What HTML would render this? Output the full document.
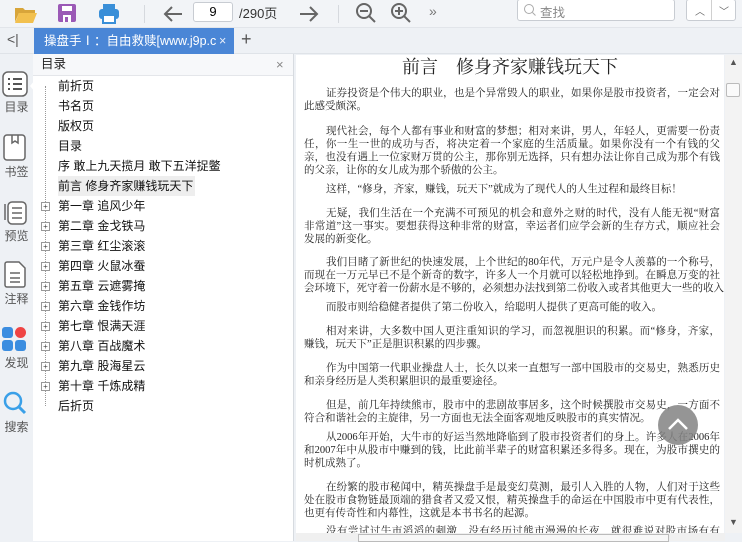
<!DOCTYPE html>
<html><head><meta charset="utf-8">
<style>
*{margin:0;padding:0;box-sizing:border-box}
body{width:742px;height:541px;overflow:hidden;background:#eef1f5;font-family:"Liberation Sans","Noto Sans CJK SC",sans-serif;position:relative}
.abs{position:absolute}
#tb{left:0;top:0;width:742px;height:28px;background:#f2f4f7;border-bottom:1px solid #e2e5ea}
#tabbar{left:0;top:28px;width:742px;height:26px;background:#eef1f5;border-bottom:1px solid #dfe3e8}
#tab{left:34px;top:28px;width:200px;height:26px;background:#4a86d6;color:#fff;font-size:12.5px;line-height:26px;padding-left:10px;white-space:nowrap;overflow:hidden}
#side{left:0;top:54px;width:33px;height:487px;background:#eef1f5}
.si{position:absolute;left:0;width:33px;text-align:center;font-size:12px;color:#555}
#toc{left:33px;top:54px;width:261px;height:487px;background:#fff;border-right:1px solid #d7dbe0}
#toch{left:0;top:0;width:260px;height:22px;border-bottom:1px solid #e4e6ea;background:#f7f8fa;font-size:12.5px;line-height:21px;padding-left:8px;color:#222}
.ti{position:absolute;left:25px;font-size:12px;color:#111;line-height:20px;height:20px;white-space:nowrap}
.pl{position:absolute;left:8px;width:9px;height:9px;border:1px solid #999;font-size:8px;line-height:7px;text-align:center;color:#444;background:#fff}
#page{left:296px;top:55px;width:428px;height:478px;background:#fff;overflow:hidden}
.ln{position:absolute;left:8px;width:416px;font-family:"Liberation Serif","Noto Serif CJK SC",serif;font-size:10.5px;line-height:13px;height:13px;color:#222;white-space:nowrap}
.j{text-align:justify;text-align-last:justify}
.i{padding-left:22px}
</style></head><body>
<div id="tb" class="abs">
 <svg class="abs" style="left:14px;top:4px" width="24" height="20"><path d="M1 4h8l2 2h10v3H5L1 18z" fill="#d8a53a"/><path d="M5 9h18l-4 10H1z" fill="#f2c04e"/></svg>
 <svg class="abs" style="left:57px;top:3px" width="20" height="20"><rect x="1" y="1" width="18" height="18" rx="2" fill="#9b59b6"/><rect x="5" y="3" width="10" height="5" fill="#fff"/><rect x="6" y="12" width="8" height="7" fill="#fff"/><rect x="8" y="14" width="3" height="5" fill="#9b59b6"/></svg>
 <svg class="abs" style="left:98px;top:2px" width="22" height="22"><rect x="5" y="2" width="12" height="5" fill="#3a8fd8"/><rect x="1" y="7" width="20" height="10" rx="3" fill="#3a8fd8"/><rect x="5" y="13" width="12" height="8" fill="#fff" stroke="#3a8fd8" stroke-width="2"/></svg>
 <div class="abs" style="left:144px;top:5px;width:1px;height:18px;background:#d6d9de"></div>
 <svg class="abs" style="left:162px;top:3px" width="22" height="22"><path d="M20 11H3M10 4l-7 7 7 7" stroke="#666" stroke-width="2" fill="none"/></svg>
 <div class="abs" style="left:193px;top:2px;width:40px;height:20px;border:1px solid #c8ccd2;border-radius:3px;background:#fff;font-size:13px;text-align:center;line-height:18px">9</div>
 <div class="abs" style="left:239px;top:3px;font-size:13px;color:#333">/290页</div>
 <svg class="abs" style="left:298px;top:3px" width="22" height="22"><path d="M2 11h17M12 4l7 7-7 7" stroke="#666" stroke-width="2" fill="none"/></svg>
 <div class="abs" style="left:338px;top:5px;width:1px;height:18px;background:#d6d9de"></div>
 <svg class="abs" style="left:355px;top:2px" width="22" height="22"><circle cx="9" cy="9" r="7" stroke="#666" stroke-width="2" fill="none"/><path d="M5 9h8M14 14l6 6" stroke="#666" stroke-width="2"/></svg>
 <svg class="abs" style="left:390px;top:2px" width="22" height="22"><circle cx="9" cy="9" r="7" stroke="#666" stroke-width="2" fill="none"/><path d="M5 9h8M9 5v8M14 14l6 6" stroke="#666" stroke-width="2"/></svg>
 <div class="abs" style="left:429px;top:3px;font-size:14px;color:#777">»</div>
 <div class="abs" style="left:517px;top:-1px;width:158px;height:22px;border:1px solid #c8ccd2;border-radius:3px;background:#fff"><svg class="abs" style="left:5px;top:3px" width="14" height="14"><circle cx="6" cy="6" r="4.5" stroke="#aaa" fill="none"/><path d="M9.5 9.5l3 3" stroke="#aaa"/></svg><span class="abs" style="left:22px;top:2px;font-size:12.5px;color:#888">查找</span></div>
 <div class="abs" style="left:686px;top:-1px;width:50px;height:22px;border:1px solid #c8ccd2;border-radius:3px;background:#fff"><div class="abs" style="left:24px;top:0;width:1px;height:20px;background:#d0d0d0"></div><span class="abs" style="left:8px;top:3px;font-size:10px;color:#666">︿</span><span class="abs" style="left:32px;top:3px;font-size:10px;color:#666">﹀</span></div>
</div>
<div id="tabbar" class="abs"><span class="abs" style="left:7px;top:3px;font-size:14px;color:#555">&lt;|</span><span class="abs" style="left:241px;top:1px;font-size:18px;color:#555">+</span></div>
<div id="tab" class="abs">操盘手Ⅰ：自由救赎[www.j9p.c<span class="abs" style="left:185px;top:0;color:#e8eefa">×</span></div>
<div id="side" class="abs">
 <svg class="abs" style="left:2px;top:17px" width="27" height="27"><rect x="1" y="1" width="24" height="24" rx="5" fill="#fff" stroke="#666" stroke-width="1.5"/><path d="M6 8h2M11 8h9M6 13h2M11 13h9M6 18h2M11 18h9" stroke="#555" stroke-width="2"/></svg>
 <div class="abs" style="left:30px;top:26px;width:0;height:0;border:6px solid transparent;border-left:0;border-right:5px solid #fff"></div>
 <div class="si" style="top:44px">目录</div>
 <svg class="abs" style="left:3px;top:80px" width="24" height="28"><rect x="1" y="1" width="21" height="25" rx="3" fill="#fff" stroke="#666" stroke-width="1.5"/><path d="M9 1v8l3-2 3 2V1" stroke="#666" fill="none" stroke-width="1.5"/></svg>
 <div class="si" style="top:109px">书签</div>
 <svg class="abs" style="left:2px;top:144px" width="26" height="28"><rect x="6" y="4" width="18" height="22" rx="4" fill="#fff" stroke="#666" stroke-width="1.5"/><path d="M3 6v16M10 10h10M10 15h10M10 20h10" stroke="#666" stroke-width="1.5"/></svg>
 <div class="si" style="top:173px">预览</div>
 <svg class="abs" style="left:3px;top:207px" width="24" height="28"><path d="M2 3a2 2 0 0 1 2-2h12l6 6v17a2 2 0 0 1-2 2H4a2 2 0 0 1-2-2z" fill="#fff" stroke="#666" stroke-width="1.5"/><path d="M7 12h10M7 17h10M7 21h10" stroke="#666" stroke-width="1.5"/></svg>
 <div class="si" style="top:236px">注释</div>
 <div class="abs" style="left:2px;top:273px;width:11px;height:11px;border-radius:3px;background:#3b8de0"></div>
 <div class="abs" style="left:15px;top:273px;width:11px;height:11px;border-radius:50%;background:#ef4444"></div>
 <div class="abs" style="left:2px;top:286px;width:11px;height:11px;border-radius:3px;background:#3b8de0"></div>
 <div class="abs" style="left:15px;top:286px;width:11px;height:11px;border-radius:3px;background:#3b8de0"></div>
 <div class="si" style="top:300px">发现</div>
 <svg class="abs" style="left:2px;top:336px" width="26" height="26"><circle cx="11" cy="11" r="8" stroke="#3aa0e8" stroke-width="2.5" fill="none"/><path d="M17 17l6 6" stroke="#3aa0e8" stroke-width="3"/></svg>
 <div class="si" style="top:364px">搜索</div>
</div>
<div id="toc" class="abs">
 <div id="toch" class="abs">目录<span class="abs" style="left:243px;top:0;color:#888;font-size:13px">×</span></div>
 <div class="abs" style="left:12px;top:32px;height:320px;border-left:1px dotted #999"></div>
 <div class="ti" style="top:22px">前折页</div>
 <div class="ti" style="top:42px">书名页</div>
 <div class="ti" style="top:62px">版权页</div>
 <div class="ti" style="top:82px">目录</div>
 <div class="ti" style="top:102px">序 敢上九天揽月 敢下五洋捉鳖</div>
 <div class="ti" style="top:122px;background:#eeeeee;padding-right:2px">前言 修身齐家赚钱玩天下</div>
 <div class="ti" style="top:142px">第一章 追风少年</div>
 <div class="ti" style="top:162px">第二章 金戈铁马</div>
 <div class="ti" style="top:182px">第三章 红尘滚滚</div>
 <div class="ti" style="top:202px">第四章 火鼠冰蚕</div>
 <div class="ti" style="top:222px">第五章 云遮雾掩</div>
 <div class="ti" style="top:242px">第六章 金钱作坊</div>
 <div class="ti" style="top:262px">第七章 恨满天涯</div>
 <div class="ti" style="top:282px">第八章 百战魔术</div>
 <div class="ti" style="top:302px">第九章 股海星云</div>
 <div class="ti" style="top:322px">第十章 千炼成精</div>
 <div class="ti" style="top:342px">后折页</div>
 <div class="pl" style="top:148px">+</div><div class="pl" style="top:168px">+</div><div class="pl" style="top:188px">+</div><div class="pl" style="top:208px">+</div><div class="pl" style="top:228px">+</div><div class="pl" style="top:248px">+</div><div class="pl" style="top:268px">+</div><div class="pl" style="top:288px">+</div><div class="pl" style="top:308px">+</div><div class="pl" style="top:328px">+</div>
</div>
<div id="page" class="abs">
 <div class="abs" style="left:0;top:0;width:428px;text-align:center;font-family:'Liberation Serif','Noto Serif CJK SC',serif;font-size:18px;line-height:24px;color:#222">前言　修身齐家赚钱玩天下</div>
 <div class="ln j i" style="top:32px">证券投资是个伟大的职业，也是个异常毁人的职业，如果你是股市投资者，一定会对</div>
 <div class="ln" style="top:45px">此感受颇深。</div>
 <div class="ln j i" style="top:70px">现代社会，每个人都有事业和财富的梦想；相对来讲，男人，年轻人，更需要一份责</div>
 <div class="ln j" style="top:83px">任，你一生一世的成功与否，将决定着一个家庭的生活质量。如果你没有一个有钱的父</div>
 <div class="ln j" style="top:96px">亲，也没有遇上一位家财万贯的公主，那你别无选择，只有想办法让你自己成为那个有钱</div>
 <div class="ln" style="top:109px">的父亲，让你的女儿成为那个骄傲的公主。</div>
 <div class="ln i" style="top:128px">这样，“修身，齐家，赚钱，玩天下”就成为了现代人的人生过程和最终目标！</div>
 <div class="ln j i" style="top:152px">无疑，我们生活在一个充满不可预见的机会和意外之财的时代，没有人能无视“财富</div>
 <div class="ln j" style="top:165px">非常道”这一事实。要想获得这种非常的财富，幸运者们应学会新的生存方式，顺应社会</div>
 <div class="ln" style="top:178px">发展的新变化。</div>
 <div class="ln j i" style="top:201px">我们目睹了新世纪的快速发展，上个世纪的80年代，万元户是令人羡慕的一个称号，</div>
 <div class="ln j" style="top:214px">而现在一万元早已不是个新奇的数字，许多人一个月就可以轻松地挣到。在瞬息万变的社</div>
 <div class="ln j" style="top:227px">会环境下，死守着一份薪水是不够的，必须想办法找到第二份收入或者其他更大一些的收入。</div>
 <div class="ln i" style="top:246px">而股市则给稳健者提供了第二份收入，给聪明人提供了更高可能的收入。</div>
 <div class="ln j i" style="top:270px">相对来讲，大多数中国人更注重知识的学习，而忽视胆识的积累。而“修身，齐家，</div>
 <div class="ln" style="top:283px">赚钱，玩天下”正是胆识积累的四步骤。</div>
 <div class="ln j i" style="top:307px">作为中国第一代职业操盘人士，长久以来一直想写一部中国股市的交易史，熟悉历史</div>
 <div class="ln" style="top:320px">和亲身经历是人类积累胆识的最重要途径。</div>
 <div class="ln j i" style="top:344px">但是，前几年持续熊市，股市中的悲剧故事居多，这个时候撰股市交易史，一方面不</div>
 <div class="ln" style="top:357px">符合和谐社会的主旋律，另一方面也无法全面客观地反映股市的真实情况。</div>
 <div class="ln j i" style="top:376px">从2006年开始，大牛市的好运当然地降临到了股市投资者们的身上。许多人在2006年</div>
 <div class="ln j" style="top:389px">和2007年中从股市中赚到的钱，比此前半辈子的财富积累还多得多。现在，为股市撰史的</div>
 <div class="ln" style="top:402px">时机成熟了。</div>
 <div class="ln j i" style="top:426px">在纷繁的股市秘闻中，精英操盘手是最变幻莫测，最引人入胜的人物，人们对于这些</div>
 <div class="ln j" style="top:439px">处在股市食物链最顶端的猎食者又爱又恨，精英操盘手的命运在中国股市中更有代表性，</div>
 <div class="ln" style="top:452px">也更有传奇性和内幕性，这就是本书书名的起源。</div>
 <div class="ln j i" style="top:470px">没有尝试过牛市滔滔的刺激，没有经历过熊市漫漫的长夜，就很难说对股市场有有</div>
 <div class="abs" style="left:362px;top:350px;width:40px;height:40px;border-radius:50%;background:rgba(130,130,130,0.85)"><svg width="40" height="40"><path d="M11 24l9-9 9 9" stroke="#fff" stroke-width="2.5" fill="none"/></svg></div>
</div>
<div class="abs" style="left:725px;top:55px;width:17px;height:478px;background:#f3f3f3"><span class="abs" style="left:4px;top:2px;font-size:9px;color:#555">▲</span><div class="abs" style="left:1px;top:28px;width:14px;height:14px;border:1px solid #bbb;border-radius:2px;background:#fafafa"></div><span class="abs" style="left:4px;top:462px;font-size:9px;color:#555">▼</span></div>
<div class="abs" style="left:296px;top:533px;width:429px;height:8px;background:#f0f0f0"><div class="abs" style="left:62px;top:1px;width:311px;height:8px;border:1px solid #bbb;background:#f8f8f8"></div></div>
</body></html>
